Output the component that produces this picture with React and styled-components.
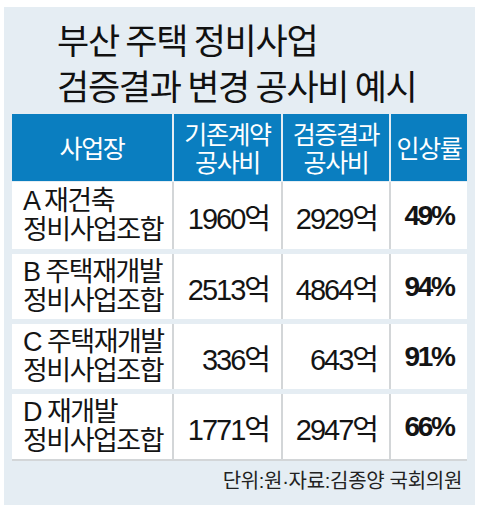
import styled, { createGlobalStyle } from 'styled-components'

const Global = createGlobalStyle`
  body {
    margin: 0;
    background: #ffffff;
    font-family: "Liberation Sans", "Noto Sans CJK KR", sans-serif;
    color: #141414;
  }
`

const Panel = styled.div`
  width: 471px;
  height: 498px;
  margin: 7px 0 0 4px;
  background: #e5edf3;
  padding: 0 8px;
  box-sizing: border-box;
  display: flex;
  flex-direction: column;
`

const Title = styled.h1`
  margin: 0;
  padding: 9px 0 0 45px;
  font-family: "Noto Sans CJK KR", sans-serif;
  font-weight: 400;
  font-size: 35px;
  line-height: 46px;
  letter-spacing: -1.3px;
  color: #111;
`

const Table = styled.div`
  margin-top: 6px;
  display: flex;
  flex-direction: column;
  gap: 5px;
`

const Row = styled.div`
  display: grid;
  grid-template-columns: 160px 107px 106px 76px;
  column-gap: 2px;
  height: ${p => (p.$head || p.$first ? '67px' : '65px')};
  background: ${p => (p.$head ? 'transparent' : '#d3d6d8')};
  margin-bottom: ${p => (p.$head ? '-4px' : '0')};
  border-bottom: ${p => (p.$last ? '2px solid #d3d6d8' : 'none')};
`

const HeadCell = styled.div`
  background: #0a7ec0;
  color: #fff;
  display: flex;
  align-items: center;
  justify-content: center;
  text-align: center;
  font-family: "Noto Sans CJK KR", sans-serif;
  font-size: 25px;
  line-height: 28px;
  letter-spacing: -1.4px;
  padding-bottom: 2px;
`

const NameCell = styled.div`
  background: #fff;
  display: flex;
  flex-direction: column;
  justify-content: center;
  padding-left: 11px;
  font-family: "Liberation Sans", "Noto Sans CJK KR", sans-serif;
  font-size: 27px;
  line-height: 29px;
  letter-spacing: -1.5px;
`

const NumCell = styled.div`
  background: #fff;
  display: flex;
  align-items: center;
  justify-content: ${p => (p.$center ? 'center' : 'flex-end')};
  padding-right: ${p => (p.$center ? '0' : '12px')};
  font-family: "Liberation Sans", "Noto Sans CJK KR", sans-serif;
  font-size: ${p => (p.$bold ? '28px' : '29px')};
  font-weight: ${p => (p.$bold ? 700 : 400)};
  letter-spacing: ${p => (p.$bold ? '-2.4px' : '-2px')};
`

const Source = styled.div`
  margin-top: 4px;
  padding-right: 5px;
  text-align: right;
  font-family: "Liberation Sans", "Noto Sans CJK KR", sans-serif;
  font-size: 20px;
  letter-spacing: -0.3px;
  color: #222;
`

const rows = [
  ['A 재건축', '1960억', '2929억', '49%'],
  ['B 주택재개발', '2513억', '4864억', '94%'],
  ['C 주택재개발', '336억', '643억', '91%'],
  ['D 재개발', '1771억', '2947억', '66%'],
]

export default function App() {
  return (
    <>
      <Global />
      <Panel>
        <Title>
          부산 주택 정비사업
          <br />
          검증결과 변경 공사비 예시
        </Title>
        <Table>
          <Row $head>
            <HeadCell>사업장</HeadCell>
            <HeadCell>기존계약<br />공사비</HeadCell>
            <HeadCell>검증결과<br />공사비</HeadCell>
            <HeadCell>인상률</HeadCell>
          </Row>
          {rows.map((r, i) => (
            <Row key={r[0]} $first={i === 0} $last={i === rows.length - 1}>
              <NameCell>
                <span>{r[0]}</span>
                <span>정비사업조합</span>
              </NameCell>
              <NumCell>{r[1]}</NumCell>
              <NumCell>{r[2]}</NumCell>
              <NumCell $center $bold>{r[3]}</NumCell>
            </Row>
          ))}
        </Table>
        <Source>단위:원·자료:김종양 국회의원</Source>
      </Panel>
    </>
  )
}
